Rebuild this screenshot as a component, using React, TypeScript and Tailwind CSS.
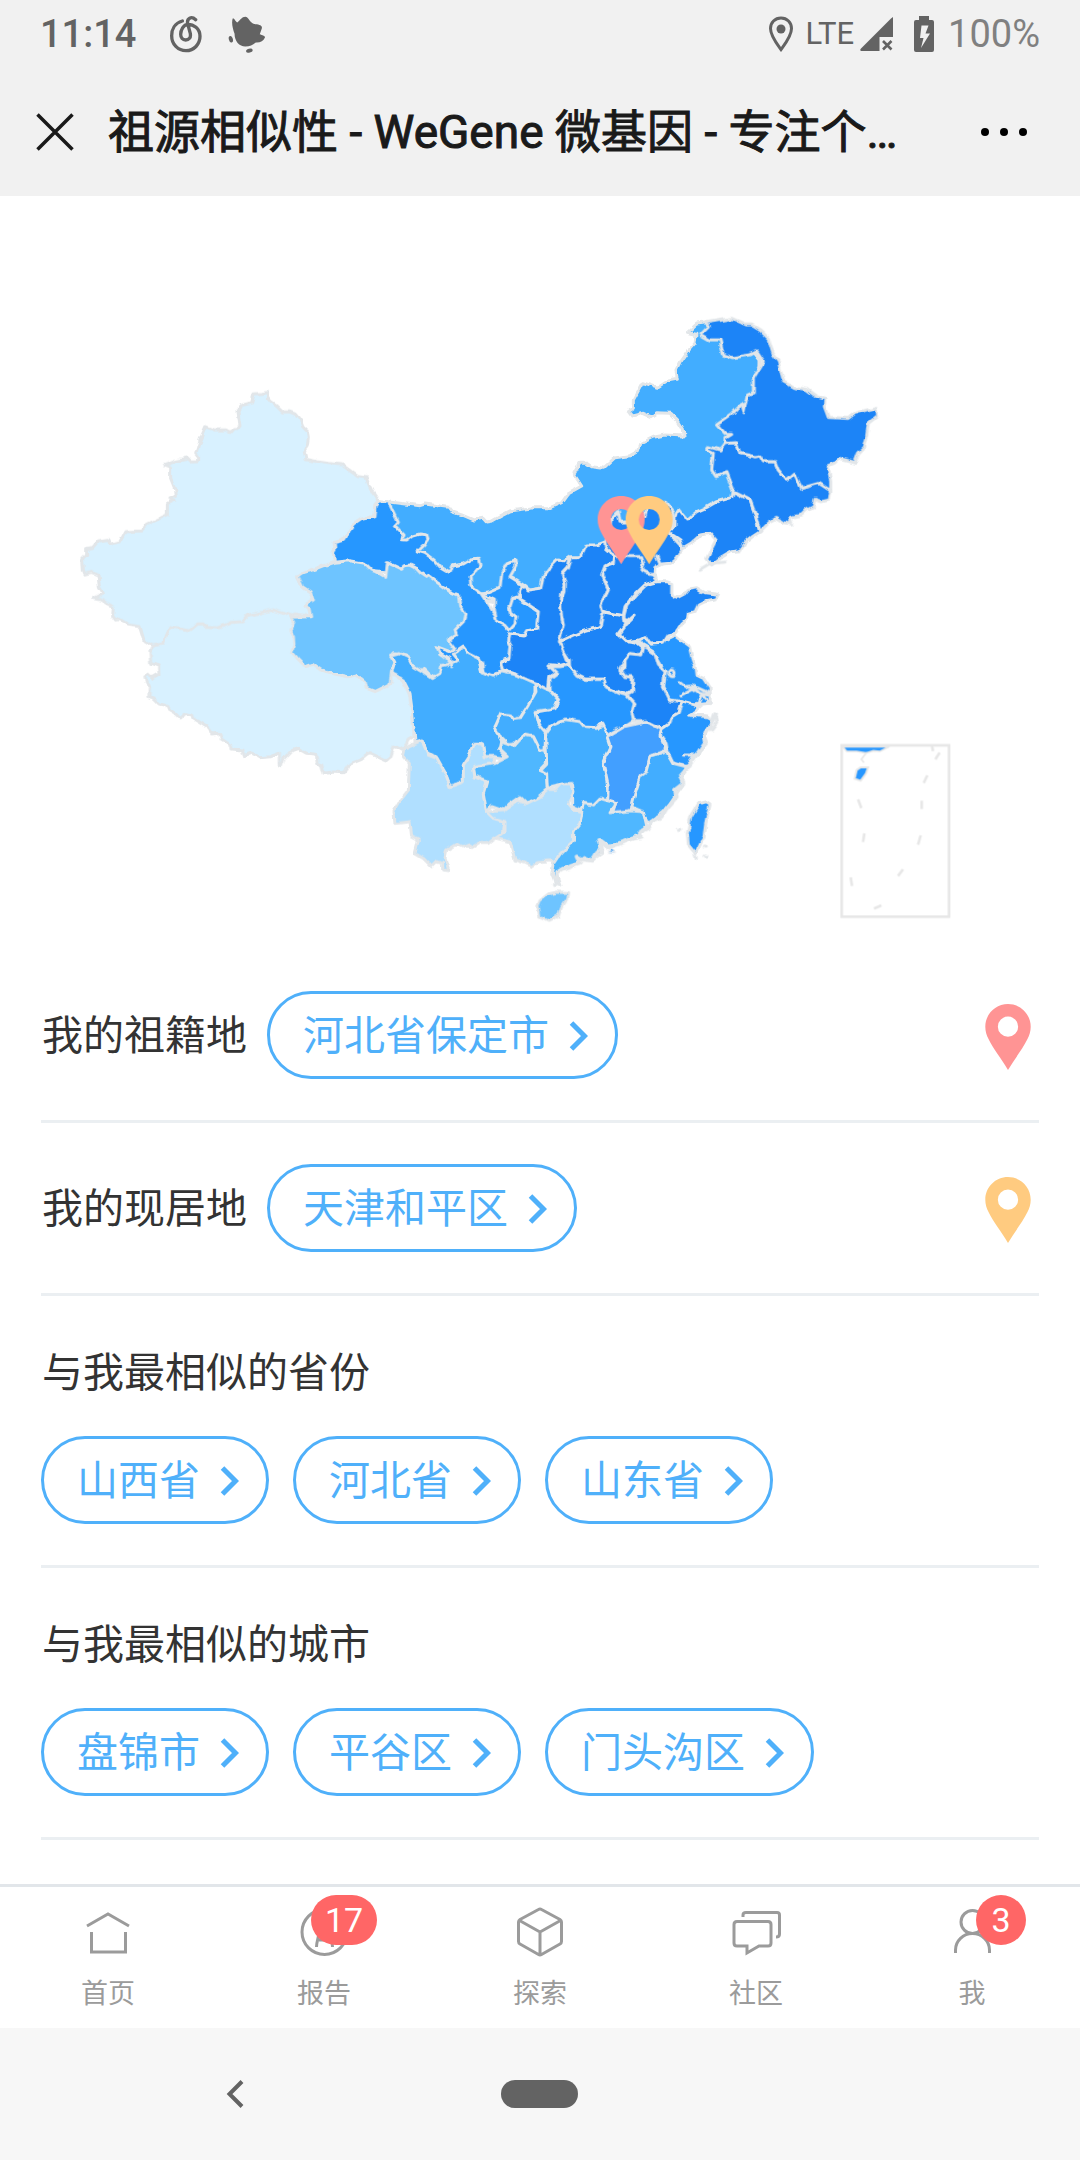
import type { ReactNode } from "react"

interface Region {
  name: string
  x: number
  y: number
  fill: string
  points: string
}

const LIGHTEST = "#d8f1ff"
const LIGHT = "#b0dfff"
const SOFT = "#6ec4ff"
const MEDIUM = "#50b7ff"
const REGULAR = "#42adff"
const STRONG = "#2797ff"
const DARK = "#1a84f7"

// Painted in order: later regions cover the rough inner edges of earlier ones
const regions: Region[] = [
  {
    name: "西藏",
    x: -1020,
    y: -210,
    fill: LIGHTEST,
    points:
      "278,828 270,845 272,880 295,888 297,912 275,925 268,912 255,920 258,934 268,950 267,980 282,984 300,1002 318,1006 325,1018 345,1030 362,1047 375,1030 398,1036 402,1048 425,1062 445,1074 458,1092 478,1090 485,1108 515,1128 516,1137 545,1140 553,1157 575,1149 600,1163 630,1160 658,1150 658,1183 665,1187 672,1165 695,1142 714,1135 740,1150 768,1153 772,1180 785,1185 792,1210 820,1206 850,1208 870,1182 905,1168 930,1148 980,1170 993,1160 1003,1128 1030,1142 1045,1110 1062,1100 1060,1040 1050,980 1030,935 990,900 900,780 700,680 500,680 340,730",
  },
  {
    name: "内蒙古",
    x: 0,
    y: 0,
    fill: REGULAR,
    points:
      "-64,182 -30,186 0,190 60,197 75,192 145,202 155,215 185,225 220,240 252,235 262,246 275,244 300,230 335,212 400,203 450,203 485,188 505,160 545,138 522,103 540,70 560,70 575,80 610,85 645,53 690,47 712,35 720,12 740,2 760,-8 795,-15 852,-12 850,-30 835,-55 810,-80 770,-82 752,-70 730,-80 695,-72 685,-85 700,-95 700,-120 728,-172 772,-158 805,-180 832,-185 828,-207 842,-235 865,-268 885,-290 888,-317 862,-323 890,-348 920,-352 1000,-340 1080,-240 1080,-20 1040,100 1000,180 900,290 700,400 500,480 400,500 250,480 100,400 0,350",
  },
  {
    name: "新疆",
    x: -1020,
    y: -210,
    fill: LIGHTEST,
    points:
      "582,72 603,70 623,67 622,83 633,97 648,107 668,126 690,126 710,134 720,146 728,170 745,187 748,205 745,228 733,245 738,268 770,275 805,280 845,284 865,298 890,316 918,320 925,340 938,368 956,392 945,405 942,440 905,448 880,465 862,490 850,508 823,515 825,540 820,548 824,577 790,588 755,602 735,606 713,620 727,650 750,665 760,690 736,705 747,714 752,740 705,732 694,738 640,720 605,727 565,736 550,755 515,757 475,774 438,772 430,762 410,762 388,780 355,774 328,770 315,800 312,822 278,828 252,812 240,770 205,765 180,748 167,750 158,738 160,712 150,705 122,690 100,685 130,670 118,650 114,615 95,607 75,612 70,600 68,568 80,556 80,535 98,532 115,513 143,508 150,522 178,515 195,485 243,483 262,463 285,452 325,433 325,400 345,390 330,383 346,376 344,355 332,325 332,295 312,287 340,276 385,266 392,273 416,272 416,262 407,252 420,210 437,170 465,180 498,180 510,187 520,176 532,175 540,165 534,125 543,106 575,98",
  },
  {
    name: "甘肃",
    x: 0,
    y: 0,
    fill: STRONG,
    points:
      "-35,185 -5,247 -14,258 12,285 6,302 20,303 40,288 62,282 80,284 84,297 70,315 52,333 75,340 100,358 120,380 148,397 155,378 190,372 210,360 235,358 240,375 226,393 210,408 212,435 245,462 283,520 338,475 360,475 378,490 415,515 410,568 380,573 370,588 330,582 326,602 333,615 330,655 302,662 308,690 280,708 250,703 245,670 235,655 205,650 190,622 165,640 175,660 150,680 120,670 100,620 0,400 -196,380 -196,367 -200,338 -195,330 -197,305 -170,298 -158,280 -140,255 -115,238 -78,230 -75,195 -64,182",
  },
  {
    name: "宁夏",
    x: 0,
    y: 0,
    fill: STRONG,
    points:
      "245,462 265,458 300,443 305,400 320,370 345,360 348,378 330,410 370,435 360,470 338,475 330,500 335,520 348,530 345,550 325,572 310,555 290,545 283,510 283,480",
  },
  {
    name: "青海",
    x: 0,
    y: 0,
    fill: SOFT,
    points:
      "-307,410 -285,396 -265,392 -230,378 -196,367 -150,362 -105,370 -85,390 -70,395 -43,412 -38,368 5,388 15,377 30,375 45,382 62,400 80,412 85,406 115,430 150,455 175,465 180,500 195,522 190,545 165,570 170,585 145,600 165,625 150,635 110,620 120,640 150,655 145,680 120,685 122,703 98,715 70,688 62,698 40,680 20,645 -17,638 -25,655 -12,665 -25,695 -30,732 -55,745 -75,755 -100,745 -105,725 -130,705 -158,710 -195,702 -235,690 -263,670 -285,678 -308,655 -325,635 -318,615 -320,590 -330,570 -320,545 -330,532 -268,530 -273,504 -284,495 -260,480 -270,455 -293,440",
  },
  {
    name: "陕西",
    x: 0,
    y: 0,
    fill: DARK,
    points:
      "510,350 490,362 470,360 455,375 430,410 422,445 385,450 370,437 358,455 360,480 385,495 415,515 410,568 380,572 372,588 330,582 326,602 333,615 330,655 302,665 308,690 350,705 365,718 405,730 445,752 450,710 475,695 448,678 480,680 507,672 495,640 480,605 490,555 482,510 485,460 495,430 487,400 505,380",
  },
  {
    name: "山西",
    x: 0,
    y: 0,
    fill: DARK,
    points:
      "515,350 505,385 487,405 496,430 495,455 482,490 484,525 490,555 478,605 520,592 545,575 580,570 605,555 610,515 603,495 625,450 605,405 620,375 640,365 642,345 620,325 618,305 590,315 560,315 548,340 535,350",
  },
  {
    name: "河北",
    x: 0,
    y: 0,
    fill: DARK,
    points:
      "618,305 630,240 655,212 660,247 690,245 735,230 745,190 800,190 818,215 820,258 812,285 845,320 846,330 828,358 812,370 785,372 765,385 762,400 772,422 735,435 700,468 675,500 670,527 640,522 607,513 603,495 625,450 605,405 615,378 640,370 642,345 620,325",
  },
  {
    name: "河南",
    x: 0,
    y: 0,
    fill: DARK,
    points:
      "480,605 545,575 600,560 610,515 640,522 670,527 672,548 675,555 655,582 680,605 712,610 730,625 720,648 690,645 675,660 660,685 675,705 697,712 697,745 680,768 650,758 615,740 610,718 555,718 525,705 508,680 508,660 492,635",
  },
  {
    name: "江苏",
    x: -60,
    y: 600,
    fill: STRONG,
    points:
      "810,12 860,0 885,-12 928,20 935,50 945,80 948,105 970,115 990,145 990,190 940,195 870,180 850,140 855,95 820,35 780,10 770,-5 795,-14",
  },
  {
    name: "山东",
    x: 0,
    y: 0,
    fill: DARK,
    points:
      "772,425 800,425 815,430 815,465 830,475 850,465 865,448 890,443 915,458 955,463 945,480 915,485 895,495 885,515 865,520 862,535 845,550 825,580 805,585 790,610 750,612 735,590 715,600 680,605 655,582 675,555 705,525 682,545 672,540 672,525 680,495 705,465 735,435",
  },
  {
    name: "湖北",
    x: -60,
    y: 600,
    fill: STRONG,
    points:
      "508,78 540,80 567,75 590,105 615,118 670,118 680,145 715,160 740,165 760,190 755,210 762,240 730,260 700,275 678,290 665,250 650,265 610,262 570,238 545,240 510,258 497,280 475,255 465,215 525,205 535,180 510,152 510,115 530,100",
  },
  {
    name: "安徽",
    x: -60,
    y: 600,
    fill: DARK,
    points:
      "772,10 800,22 825,40 835,75 855,95 850,140 870,180 905,185 895,220 875,230 870,250 845,268 800,245 762,245 755,215 762,190 740,165 758,155 758,110 735,110 720,90 735,80 735,60 750,40 785,45 790,25",
  },
  {
    name: "浙江",
    x: -60,
    y: 600,
    fill: STRONG,
    points:
      "905,185 960,200 930,225 985,228 998,245 985,265 972,290 980,310 950,345 920,380 880,370 862,330 858,310 840,285 845,268 870,250 875,230 895,218",
  },
  {
    name: "四川",
    x: -60,
    y: 600,
    fill: REGULAR,
    points:
      "35,45 60,38 85,50 100,80 125,95 155,115 180,100 185,80 210,75 235,60 220,42 250,22 265,40 295,55 305,95 340,108 365,95 410,105 465,130 465,165 440,205 420,235 400,238 370,225 345,260 360,300 380,325 355,325 380,355 340,350 315,350 305,310 285,310 270,345 250,375 250,425 210,440 195,400 165,350 140,335 125,300 105,305 98,220 90,160 70,120 50,108 35,100 45,65",
  },
  {
    name: "重庆",
    x: -60,
    y: 600,
    fill: REGULAR,
    points:
      "465,130 468,155 445,195 420,235 400,238 392,225 362,222 345,262 360,290 385,315 410,312 430,285 460,290 480,330 495,330 497,280 475,255 465,215 525,205 535,180 510,152",
  },
  {
    name: "云南",
    x: -60,
    y: 600,
    fill: LIGHT,
    points:
      "105,310 125,300 145,345 170,355 195,400 210,440 250,425 250,375 270,345 285,310 308,312 312,350 345,350 340,372 285,380 285,410 318,425 310,460 320,515 375,545 370,580 340,598 325,610 295,610 280,620 265,612 245,620 230,612 200,630 195,655 207,692 185,690 185,670 170,665 155,680 130,655 105,640 115,600 95,590 90,545 45,550 42,515 62,480 85,450 88,370 70,350 75,325",
  },
  {
    name: "贵州",
    x: -60,
    y: 600,
    fill: MEDIUM,
    points:
      "345,370 385,350 358,325 362,305 400,318 430,285 460,290 480,330 497,330 503,365 480,390 503,400 505,445 470,475 440,490 420,470 385,495 370,512 335,500 320,515 310,460 320,425 285,410 280,380",
  },
  {
    name: "湖南",
    x: -60,
    y: 600,
    fill: REGULAR,
    points:
      "497,280 515,255 555,238 600,245 615,262 650,265 665,250 685,290 690,320 670,360 680,400 685,478 660,475 640,495 610,490 605,510 578,500 578,435 560,430 505,445 503,400 480,390 500,370",
  },
  {
    name: "江西",
    x: -60,
    y: 600,
    fill: "#429fff",
    points:
      "680,290 730,260 775,250 800,245 845,268 840,285 858,330 810,350 800,400 780,410 760,495 750,515 700,518 710,490 683,478 685,440 670,370 690,320",
  },
  {
    name: "福建",
    x: -60,
    y: 600,
    fill: REGULAR,
    points:
      "858,332 880,370 920,380 905,415 908,435 890,460 870,490 850,515 825,535 815,550 800,545 790,515 755,500 765,460 782,408 800,395 812,350",
  },
  {
    name: "广东",
    x: -60,
    y: 600,
    fill: MEDIUM,
    points:
      "605,515 610,490 640,495 660,475 710,490 690,518 750,512 790,515 800,560 780,590 720,608 690,620 660,600 665,640 635,660 610,650 590,672 548,685 528,698 540,735 525,725 515,700 520,670 540,640 580,605 582,570 600,550",
  },
  {
    name: "广西",
    x: -60,
    y: 600,
    fill: LIGHT,
    points:
      "320,515 370,512 415,480 440,490 480,470 505,448 530,448 545,432 575,430 582,455 565,490 580,508 605,515 600,550 580,575 580,605 540,645 525,668 510,662 475,665 455,680 430,668 405,660 390,605 350,595 375,575 375,545 340,535",
  },
  {
    name: "海南",
    x: -60,
    y: 600,
    fill: SOFT,
    points: "505,762 530,756 563,758 560,778 545,800 535,828 505,844 480,832 474,800 480,782",
  },
  {
    name: "台湾",
    x: -60,
    y: 600,
    fill: STRONG,
    points: "955,492 980,485 990,492 978,545 972,590 948,640 925,612 922,580 932,530",
  },
  {
    name: "辽宁",
    x: 480,
    y: -420,
    fill: DARK,
    points:
      "520,575 540,580 570,600 585,640 600,695 575,712 560,725 540,752 510,755 485,770 455,795 440,775 468,720 450,700 420,705 395,728 368,744 360,720 330,700 345,680 345,650 355,628 380,660 410,635 440,622 470,605 515,592",
  },
  {
    name: "吉林",
    x: 480,
    y: -420,
    fill: DARK,
    points:
      "495,430 530,428 540,460 585,470 600,468 610,485 645,485 655,510 680,540 703,520 725,565 775,548 812,572 808,600 785,605 765,598 760,620 740,630 725,645 690,652 695,672 670,668 650,655 630,665 600,695 585,640 570,600 520,575 498,518 468,530 455,510 460,460 440,450 445,440 480,450",
  },
  {
    name: "黑龙江",
    x: 480,
    y: -420,
    fill: DARK,
    points:
      "440,68 515,55 560,75 575,75 600,90 625,115 640,165 655,185 670,245 700,262 740,268 770,290 795,297 793,320 805,352 865,355 885,340 948,322 950,350 925,370 920,405 910,445 895,460 885,487 838,475 825,488 802,498 812,540 812,572 778,550 725,565 703,520 680,540 655,510 645,485 610,485 600,468 585,470 540,460 530,428 495,430 495,412 515,400 495,400 470,372 515,340 545,310 552,335 562,285 580,278 580,235 610,185 590,155 570,165 515,173 490,165 480,120 450,120 420,103 445,78",
  },
]

const seaMarks = [
  "M336 78l3 15",
  "M359 98l-13 20",
  "M322 166l-11 23",
  "M305 242v25",
  "M302 346l-8 28",
  "M249 448l-15 20",
  "M184 556l-22 10",
  "M92 472l4 26",
  "M133 340l-4 26",
  "M114 238l10 26",
]

const PIN_PATH =
  "M70.5 0C31.5 0 0 31.5 0 70.5C0 85 4 97 10 109C25 140 50 170 70.5 205C91 170 116 140 131 109C137 97 141 85 141 70.5C141 31.5 109.5 0 70.5 0ZM70.5 39A31.5 31.5 0 1 1 70.5 102A31.5 31.5 0 1 1 70.5 39Z"

function ChinaMap() {
  return (
    <svg viewBox="-1200 -732 3240 2262" className="block h-auto w-full" role="img" aria-label="祖源相似性地图">
      <filter id="coast" x="-2%" y="-2%" width="104%" height="104%">
        <feTurbulence type="fractalNoise" baseFrequency="0.035" numOctaves="2" seed="4" />
        <feDisplacementMap in="SourceGraphic" scale="16" xChannelSelector="R" yChannelSelector="G" />
      </filter>

      <g filter="url(#coast)" stroke="#e2e6e9" strokeWidth="9" strokeLinejoin="round" strokeLinecap="round">
        {regions.map((r) => (
          <polygon key={r.name} points={r.points} fill={r.fill} transform={`translate(${r.x} ${r.y})`} />
        ))}
        {/* Municipalities, lakes and small islands */}
        <g fill="none">
          <path d="M642 345L690 350L725 350L732 370L726 390L740 398L765 402M770 348L780 372" />
          <path d="M840 728L855 740L880 738L930 760M840 765L880 745L900 760L925 765M895 790L905 765L930 790M870 825L925 830" />
          <circle cx="815" cy="700" r="10" />
          <path d="M900 388L930 370L975 366M120 640L148 660L155 680M945 825L950 850L935 870M850 945L890 945" />
          <path d="M835 1168h8M913 1218h3M915 1248h3M885 1240l4 18" />
        </g>
        {/* Ragged south-east coast */}
        <path
          fill="none"
          strokeWidth="12"
          d="M465 1335L470 1300L485 1290L540 1270L530 1250L550 1262L575 1265L590 1240L606 1225L598 1200L625 1222L660 1210L680 1200L725 1190L722 1175L745 1165L760 1140L785 1130L800 1105L830 1070L825 1050L850 1030L840 1010L862 985L895 935L915 905L912 885L930 860L945 820"
        />
        <path d="M622 1236l12 -8l12 8z" fill={STRONG} strokeWidth="3" />
      </g>

      {/* South China Sea inset */}
      <g transform="translate(1260 840)" stroke="#e7e7e7" strokeWidth="8" fill="none">
        <path
          d="M68 80H208L180 94L160 92L138 99L124 118L132 128L124 118L138 99L110 94L80 94Z"
          fill={STRONG}
          strokeWidth="5"
        />
        <path d="M110 150L122 142L144 142L138 160L122 182L104 176Z" fill={STRONG} strokeWidth="6" />
        {seaMarks.map((d) => (
          <path key={d} d={d} />
        ))}
        <rect x="65" y="76" width="322" height="514" />
      </g>

      <path d={PIN_PATH} fill="#ff9494" fillRule="evenodd" transform="translate(593 168)" />
      <path d={PIN_PATH} fill="#ffcb80" fillRule="evenodd" transform="translate(677 168)" />
    </svg>
  )
}

function Pin({ className }: { className: string }) {
  return (
    <svg viewBox="0 0 141 205" className={`mt-1 mr-2 h-[66px] w-[46px] ${className}`} aria-hidden="true">
      <path d={PIN_PATH} fill="currentColor" fillRule="evenodd" />
    </svg>
  )
}

function PlaceButton({ children }: { children: ReactNode }) {
  return (
    <button
      type="button"
      className="flex h-[88px] items-center gap-5 rounded-full border-3 border-[#4fb0fa] pt-0.5 pr-[27px] pl-[33px] text-[41px] leading-[66px] text-[#4fb0fa]"
    >
      {children}
      <svg viewBox="0 0 19 30" className="h-[30px] w-[19px]" fill="none" stroke="currentColor" strokeWidth="5" aria-hidden="true">
        <path d="M2.5 2L15.5 15L2.5 28" />
      </svg>
    </button>
  )
}

function PlaceRow({ label, place, pin }: { label: string; place: string; pin: string }) {
  return (
    <section className="flex items-center gap-5 border-b-3 border-[#ebeff2] py-[41px]">
      <h2 className="pt-0.5 pl-px text-[41px] leading-[66px]">{label}</h2>
      <div className="flex-1">
        <PlaceButton>{place}</PlaceButton>
      </div>
      <Pin className={pin} />
    </section>
  )
}

function PlaceGroup({ title, places }: { title: string; places: string[] }) {
  return (
    <section className="border-b-3 border-[#ebeff2] pt-11 pb-[41px]">
      <h2 className="pl-px text-[41px] leading-[66px]">{title}</h2>
      <div className="mt-[30px] flex flex-wrap gap-6">
        {places.map((place) => (
          <PlaceButton key={place}>{place}</PlaceButton>
        ))}
      </div>
    </section>
  )
}

function StatusBar() {
  return (
    <div className="flex h-[68px] items-center justify-between px-10 text-[#636363]">
      <div className="flex items-center">
        <span className="text-[38px] font-medium">11:14</span>
        <svg viewBox="490 44 104 114" className="ml-8 h-[38px] w-9" fill="none" stroke="currentColor" strokeWidth="10" strokeLinecap="round">
          <path d="M531 62C508 68 499 88 499 106C499 132 518 151 542 151C566 151 584 132 584 108C584 84 564 72 548 72C534 72 526 90 526 102C526 112 532 119 541 119C551 119 557 112 555 100L547 70C544 54 558 46 571 58" />
        </svg>
        <svg viewBox="660 40 118 116" className="ml-[23px] h-[39px] w-10" fill="currentColor">
          <path d="M677 50C682 50 684 60 690 62C700 55 703 45 714 45C724 46 727 62 740 67C752 68 766 70 763 80L757 97C765 100 775 102 772 108C768 118 758 123 745 122C735 130 728 134 714 134C696 134 682 118 682 96C676 80 672 60 677 50Z" />
          <ellipse cx="671" cy="112" rx="6" ry="10" transform="rotate(-15 671 112)" />
          <ellipse cx="726" cy="146" rx="10" ry="6" transform="rotate(-15 726 146)" />
        </svg>
      </div>
      <div className="flex items-center">
        <svg viewBox="0 0 24 36" className="h-9 w-6" fill="none" stroke="currentColor" strokeWidth="3">
          <path d="M12 2C6 2 1.5 6.500 1.500 12.500C1.500 20 8 28 12 33.500C16 28 22.500 20 22.500 12.500C22.500 6.500 18 2 12 2Z" />
          <circle cx="12" cy="13" r="4.500" fill="currentColor" stroke="none" />
        </svg>
        <span className="ml-3 text-[31px]">LTE</span>
        <svg viewBox="0 0 34 34" className="ml-1.5 h-[34px] w-[34px]" fill="currentColor">
          <path d="M33 0V20H19.500V34H1Q-.5 33 1 31.500L31 1.500Z" />
          <path d="M23 24L31.500 32.500M31.500 24L23 32.500" stroke="currentColor" strokeWidth="2.600" />
        </svg>
        <svg viewBox="0 0 20 36" className="ml-5 h-9 w-5" fill="currentColor">
          <path
            fillRule="evenodd"
            d="M5 0H15V4H18Q20 4 20 6V34Q20 36 18 36H2Q0 36 0 34V6Q0 4 2 4H5ZM7.500 9.500L6 22H9.500L7 32L16 17.500H11.500L14.500 9.500Z"
          />
        </svg>
        <span className="ml-3.5 text-[38px] text-[#808080]">100%</span>
      </div>
    </div>
  )
}

function TitleBar() {
  return (
    <div className="flex h-32 items-center px-9">
      <button type="button" aria-label="关闭">
        <svg viewBox="0 0 38 38" className="h-[38px] w-[38px]" fill="none" stroke="#1a1a1a" strokeWidth="3.500">
          <path d="M1.500 1.500L36.500 36.500M36.500 1.500L1.500 36.500" />
        </svg>
      </button>
      <h1 className="ml-[34px] flex-1 text-[46px] whitespace-nowrap text-[#1a1a1a] [-webkit-text-stroke:1px_#1a1a1a]">
        祖源相似性 - WeGene 微基因 - 专注个…
      </h1>
      <button type="button" aria-label="更多" className="mr-4">
        <svg viewBox="0 0 48 10" className="h-2.5 w-12">
          <circle cx="5" cy="5" r="4" />
          <circle cx="24" cy="5" r="4" />
          <circle cx="43" cy="5" r="4" />
        </svg>
      </button>
    </div>
  )
}

interface Tab {
  label: string
  icon: ReactNode
  badge?: number
  badgeClass?: string
}

const tabs: Tab[] = [
  { label: "首页", icon: <path d="M7 22L28 10L49 22M11.500 28V48H45.500V28" /> },
  {
    label: "报告",
    icon: (
      <>
        <circle cx="28.500" cy="28" r="22.500" />
        <path d="M20.500 43C20.500 36 24 32 25 14H32C33 32 36.500 36 36.500 43M23 36H34" />
      </>
    ),
    badge: 17,
    badgeClass: "-ml-[13px]",
  },
  {
    label: "探索",
    icon: (
      <path
        strokeLinejoin="round"
        d="M26.500 5.500Q28 4.500 29.500 5.500L48 15.500Q49.500 16.500 49.500 18V37.500Q49.500 39 48 40L29.500 50.500Q28 51.500 26.500 50.500L8 40Q6.500 39 6.500 37.500V18Q6.500 16.500 8 15.500ZM7.500 16.500L28 28L48.500 16.500M28 28V51"
      />
    ),
  },
  {
    label: "社区",
    icon: (
      <path d="M9 17.500H40Q43 17.500 43 20.500V39Q43 42 40 42H31L19 49V42H9Q6 42 6 39V20.500Q6 17.500 9 17.500ZM15 13V11Q15 8.500 18 8.500H49Q51.500 8.500 51.500 11V30Q51.500 33 48 33" />
    ),
  },
  {
    label: "我",
    icon: (
      <>
        <circle cx="28.500" cy="18" r="11.500" />
        <path d="M11.500 49V46A17 16.500 0 0 1 45.500 46V49" />
      </>
    ),
    badge: 3,
    badgeClass: "ml-1",
  },
]

function TabBar() {
  return (
    <nav className="grid h-36 grid-cols-5 border-t-3 border-[#e2e6ea] bg-white">
      {tabs.map((tab) => (
        <a key={tab.label} href="#" className="relative flex flex-col items-center pt-[17px] text-[#9b9b9b]">
          <svg viewBox="0 0 56 56" className="h-14 w-14" fill="none" stroke="currentColor" strokeWidth="3" aria-hidden="true">
            {tab.icon}
          </svg>
          <span className="mt-3.5 text-[27px] leading-10">{tab.label}</span>
          {tab.badge && (
            <span
              className={`absolute top-2 left-1/2 flex h-[50px] min-w-[50px] items-center justify-center rounded-full bg-[#ff6666] px-3.5 text-[34px] leading-none text-white ${tab.badgeClass}`}
            >
              {tab.badge}
            </span>
          )}
        </a>
      ))}
    </nav>
  )
}

function SystemNav() {
  return (
    <div className="grid h-[132px] grid-cols-3 place-items-center bg-[#f7f7f7] px-[82px] text-[#636363]">
      <button type="button" aria-label="返回">
        <svg viewBox="0 0 18 28" className="h-7 w-[18px]" fill="none" stroke="currentColor" strokeWidth="4">
          <path d="M16 1.500L3.500 14L16 26.500" />
        </svg>
      </button>
      <button type="button" aria-label="主屏幕" className="h-7 w-[77px] rounded-full bg-[#636363]" />
    </div>
  )
}

export default function App() {
  return (
    <div className="flex min-h-screen flex-col bg-white font-[Roboto,'Noto_Sans_CJK_SC',sans-serif] text-[#333]">
      <header className="bg-[#f1f1f1]">
        <StatusBar />
        <TitleBar />
      </header>
      <main className="flex-1">
        <ChinaMap />
        <div className="px-[41px]">
          <PlaceRow label="我的祖籍地" place="河北省保定市" pin="text-[#ff9494]" />
          <PlaceRow label="我的现居地" place="天津和平区" pin="text-[#ffcb80]" />
          <PlaceGroup title="与我最相似的省份" places={["山西省", "河北省", "山东省"]} />
          <PlaceGroup title="与我最相似的城市" places={["盘锦市", "平谷区", "门头沟区"]} />
        </div>
      </main>
      <TabBar />
      <SystemNav />
    </div>
  )
}
